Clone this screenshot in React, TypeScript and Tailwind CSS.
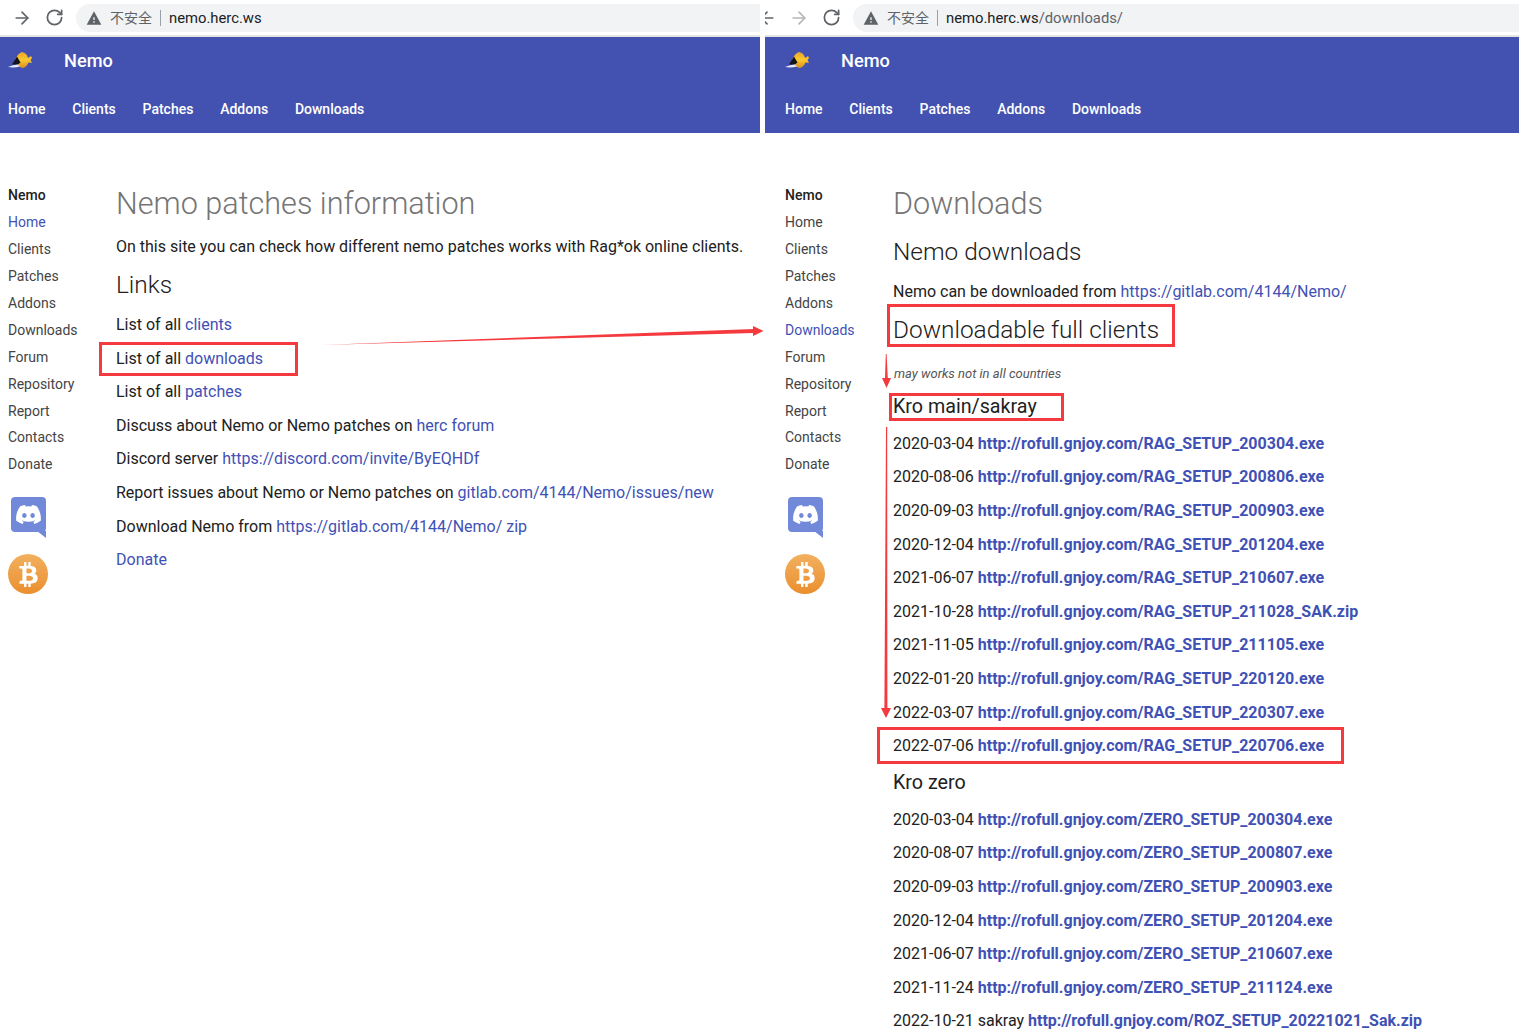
import { ArrowLeft, ArrowRight, RotateCw } from "lucide-react";
import { FaBtc, FaDiscord } from "react-icons/fa";

const BLUE = "text-[#3f51b5]";

const sideItems = ["Home", "Clients", "Patches", "Addons", "Downloads", "Forum", "Repository", "Report", "Contacts", "Donate"];
const navItems = ["Home", "Clients", "Patches", "Addons", "Downloads"];

const mainClients = [
  ["2020-03-04", "RAG_SETUP_200304.exe"],
  ["2020-08-06", "RAG_SETUP_200806.exe"],
  ["2020-09-03", "RAG_SETUP_200903.exe"],
  ["2020-12-04", "RAG_SETUP_201204.exe"],
  ["2021-06-07", "RAG_SETUP_210607.exe"],
  ["2021-10-28", "RAG_SETUP_211028_SAK.zip"],
  ["2021-11-05", "RAG_SETUP_211105.exe"],
  ["2022-01-20", "RAG_SETUP_220120.exe"],
  ["2022-03-07", "RAG_SETUP_220307.exe"],
  ["2022-07-06", "RAG_SETUP_220706.exe"],
];

const zeroClients = [
  ["2020-03-04", "ZERO_SETUP_200304.exe"],
  ["2020-08-07", "ZERO_SETUP_200807.exe"],
  ["2020-09-03", "ZERO_SETUP_200903.exe"],
  ["2020-12-04", "ZERO_SETUP_201204.exe"],
  ["2021-06-07", "ZERO_SETUP_210607.exe"],
  ["2021-11-24", "ZERO_SETUP_211124.exe"],
  ["2022-10-21 sakray", "ROZ_SETUP_20221021_Sak.zip"],
];

function FishLogo() {
  return (
    <svg width="26" height="20" viewBox="0 0 26 20" className="-mt-[1px] shrink-0">
      <defs>
        <linearGradient id="fish" x1="0" y1="0" x2="0" y2="1">
          <stop offset="0" stopColor="#eea32a" />
          <stop offset="0.5" stopColor="#fbc930" />
          <stop offset="1" stopColor="#d88c20" />
        </linearGradient>
      </defs>
      <path d="M7 9 Q10 2 14 1 Q19 2 20 7 L23 5 L24 7 L22.500 9 L24 12 L20.500 11.500 Q18 17 14 17 Q9 15 7 9Z" fill="url(#fish)" />
      <path d="M4 13.500 L9 5.500 L12.500 11.500 L10 13.500Z" fill="#14141c" />
      <path d="M0 16 Q5 13.500 10 13.500 L12 15.500 Q6 17 0 16Z" fill="#e4e8fa" />
    </svg>
  );
}

function DiscordBadge() {
  return (
    <div className="relative ml-[3px] h-[41px] w-[35px]">
      <div className="flex h-[35px] w-[35px] items-center justify-center rounded-[4px] bg-[#7289da]">
        <FaDiscord className="h-[27px] w-[27px] text-white" />
      </div>
      <svg width="9" height="7" viewBox="0 0 9 7" className="absolute right-0 bottom-0">
        <path d="M0 0H9V7Z" fill="#7289da" />
      </svg>
    </div>
  );
}

function BitcoinBadge() {
  return (
    <div className="mt-[16px] flex h-[40px] w-[40px] items-center justify-center rounded-full bg-gradient-to-b from-[#f2b05e] to-[#ea8f2c]">
      <FaBtc className="h-[25px] w-[25px] text-white" />
    </div>
  );
}

function TopBar({ url, path, back }: { url: string; path?: string; back: boolean }) {
  return (
    <div className="flex h-[37px] items-center overflow-hidden border-b-2 border-[#e4e4e4] bg-white pt-[1px]">
      <div className={back ? "-ml-[14px] flex" : "ml-[6px] flex"}>
        {back && (
          <div className="flex w-[32px] justify-center">
            <ArrowLeft size={20} strokeWidth={2} className="text-[#5f6368]" />
          </div>
        )}
        <div className="flex w-[32px] justify-center">
          <ArrowRight size={20} strokeWidth={2} className={back ? "text-[#b4b6b9]" : "text-[#5f6368]"} />
        </div>
        <div className="flex w-[32px] justify-center">
          <RotateCw size={19} strokeWidth={2.2} className="text-[#5f6368]" />
        </div>
      </div>
      <div className="ml-[6px] flex h-[28px] flex-1 items-center rounded-l-[14px] bg-[#f1f3f4] pl-[10px] text-[14.800px] font-['Roboto',sans-serif]">
        <svg width="16" height="16" viewBox="0 0 24 24" className="shrink-0">
          <path d="M1 22h22L12 2 1 22zm12-3h-2v-2h2v2zm0-4h-2v-4h2v4z" fill="#5f6368" />
        </svg>
        <span className="-mt-[2px] ml-[8px] text-[14px] text-[#5f6368] font-['Noto_Sans_CJK_SC',sans-serif]">不安全</span>
        <span className="mx-[8px] h-[16px] w-px bg-[#9aa0a6]" />
        <span className="text-[#202124]">{url}</span>
        {path && <span className="text-[#5f6368]">{path}</span>}
      </div>
    </div>
  );
}

function Header({ inset }: { inset: string }) {
  return (
    <header className={`h-[96px] bg-[#4352b0] text-white ${inset}`}>
      <div className="flex h-[48px] items-center">
        <FishLogo />
        <span className="ml-[30px] text-[18.200px] font-medium">Nemo</span>
      </div>
      <nav className="flex h-[48px] items-center gap-[26.750px] text-[14px] font-medium">
        {navItems.map((n) => (
          <span key={n}>{n}</span>
        ))}
      </nav>
    </header>
  );
}

function Sidebar({ active, inset }: { active: string; inset: string }) {
  return (
    <aside className={`shrink-0 pt-[49.300px] text-[14px] leading-[26.900px] text-[#444] ${inset}`}>
      <div className="font-medium text-[#212121]">Nemo</div>
      {sideItems.map((s) => (
        <div key={s} className={s === active ? BLUE : ""}>
          {s}
        </div>
      ))}
      <div className="mt-[19.200px]">
        <DiscordBadge />
        <BitcoinBadge />
      </div>
    </aside>
  );
}

function H1({ children }: { children: React.ReactNode }) {
  return <h1 className="mb-[12px] text-[30.600px] leading-[38px] font-light text-[#757575]">{children}</h1>;
}

function H2({ children }: { children: React.ReactNode }) {
  return <h2 className="mt-[1px] mb-[14.400px] text-[24.400px] leading-[29px] font-light text-[#212121]">{children}</h2>;
}

function P({ children }: { children: React.ReactNode }) {
  return <p className="mb-[9.600px] text-[16px] leading-[24px] text-[#212121]">{children}</p>;
}

function A({ children }: { children: React.ReactNode }) {
  return <a className={BLUE}>{children}</a>;
}

function ClientRows({ rows }: { rows: string[][] }) {
  return (
    <>
      {rows.map(([date, file]) => (
        <P key={file}>
          {date} <b className={`font-bold ${BLUE}`}>http://rofull.gnjoy.com/{file}</b>
        </P>
      ))}
    </>
  );
}

function HomeContent() {
  return (
    <main className="flex min-w-0 flex-1 flex-col pt-[52px]">
      <H1>Nemo patches information</H1>
      <P>On this site you can check how different nemo patches works with Rag*ok online clients.</P>
      <H2>Links</H2>
      <P>List of all <A>clients</A></P>
      <P>List of all <A>downloads</A></P>
      <P>List of all <A>patches</A></P>
      <P>Discuss about Nemo or Nemo patches on <A>herc forum</A></P>
      <P>Discord server <A>https://discord.com/invite/ByEQHDf</A></P>
      <P>Report issues about Nemo or Nemo patches on <A>gitlab.com/4144/Nemo/issues/new</A></P>
      <P>Download Nemo from <A>https://gitlab.com/4144/Nemo/</A> <A>zip</A></P>
      <P><A>Donate</A></P>
    </main>
  );
}

function DownloadsContent() {
  return (
    <main className="flex min-w-0 flex-1 flex-col pt-[52px]">
      <H1>Downloads</H1>
      <h2 className="mt-[2px] mb-[14px] text-[24.400px] leading-[29px] font-light text-[#212121]">Nemo downloads</h2>
      <P>Nemo can be downloaded from <A>https://gitlab.com/4144/Nemo/</A></P>
      <H2>Downloadable full clients</H2>
      <p className="mt-[5.600px] ml-px text-[13px] leading-[19px] text-[#555] italic">may works not in all countries</p>
      <h3 className="mt-[12.500px] mb-[12.700px] text-[19.700px] leading-[24px] text-[#212121]">Kro main/sakray</h3>
      <ClientRows rows={mainClients} />
      <h3 className="mt-[3.400px] mb-[12.700px] text-[19.700px] leading-[24px] text-[#212121]">Kro zero</h3>
      <ClientRows rows={zeroClients} />
    </main>
  );
}

function RedBox({ className }: { className: string }) {
  return <div className={`pointer-events-none absolute border-[3px] border-[#f53a3f] ${className}`} />;
}

function Annotations() {
  return (
    <>
      <RedBox className="top-[342px] left-[99px] h-[34px] w-[199px]" />
      <RedBox className="top-[304px] left-[887px] h-[43px] w-[288px]" />
      <RedBox className="top-[393px] left-[889px] h-[28px] w-[175px]" />
      <RedBox className="top-[727px] left-[877px] h-[37px] w-[467px]" />
      <svg width="1519" height="1032" className="pointer-events-none absolute top-0 left-0">
        <path d="M321 345 L754 329 L754 333 Z" fill="#f53a3f" />
        <path d="M753 326 L763.500 331 L753 336 Z" fill="#f53a3f" />
        <path d="M885.800 354 L886.600 354 L887.800 378 L891 378 L886.500 388 L882 378 L885 378 Z" fill="#f53a3f" />
        <path d="M886 427 L887.200 427 L887.400 708 L891 708 L886 718 L881 708 L884.400 708 Z" fill="#f53a3f" />
      </svg>
    </>
  );
}

export default function App() {
  return (
    <div className="relative flex h-[1032px] w-[1519px] overflow-hidden bg-white font-['Roboto',sans-serif]">
      <section className="w-[760px] shrink-0">
        <TopBar url="nemo.herc.ws" back={false} />
        <Header inset="pl-[8px]" />
        <div className="flex">
          <Sidebar active="Home" inset="w-[116px] pl-[8px]" />
          <HomeContent />
        </div>
      </section>
      <section className="ml-[5px] min-w-0 flex-1">
        <TopBar url="nemo.herc.ws" path="/downloads/" back />
        <Header inset="pl-[20px]" />
        <div className="flex">
          <Sidebar active="Downloads" inset="w-[128px] pl-[20px]" />
          <DownloadsContent />
        </div>
      </section>
      <Annotations />
    </div>
  );
}
